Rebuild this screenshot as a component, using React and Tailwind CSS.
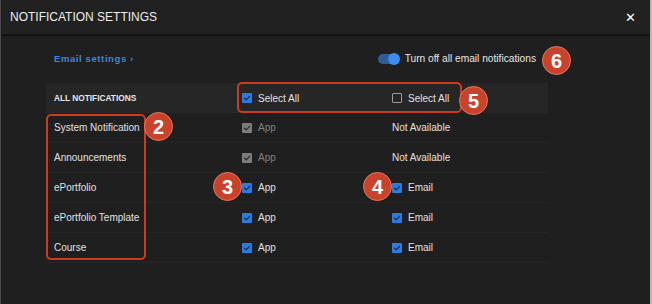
import React from "react";

const rows = [
  { name: "System Notification", app: "disabled", email: null },
  { name: "Announcements", app: "disabled", email: null },
  { name: "ePortfolio", app: "on", email: "on" },
  { name: "ePortfolio Template", app: "on", email: "on" },
  { name: "Course", app: "on", email: "on" },
];

function Check({ state }) {
  if (state === "off") {
    return <span className="inline-block w-[10px] h-[10px] rounded-[1px] border border-[#9a9a9a] bg-transparent" />;
  }
  const bg = state === "disabled" ? "bg-[#7c7c7c]" : "bg-[#2d7be0]";
  return (
    <span className={`inline-flex items-center justify-center w-[10px] h-[10px] rounded-[1px] ${bg}`}>
      <svg width="8" height="8" viewBox="0 0 8 8" fill="none">
        <path d="M1.5 4.2 L3.2 5.8 L6.6 2.3" stroke="#1f2a38" strokeWidth="1.2" strokeLinecap="round" strokeLinejoin="round" />
      </svg>
    </span>
  );
}

function Badge({ n, className }) {
  return (
    <div className={`absolute w-[29px] h-[29px] rounded-full bg-[#c9432c] border border-[#e07a62] flex items-center justify-center text-white font-bold text-[20px] leading-none ${className}`}>
      {n}
    </div>
  );
}

export default function App() {
  return (
    <div className="w-[652px] h-[304px] bg-[#1f1f1f] border-l border-[#4a4a4a] border-r-2 border-r-[#b8b8b8] overflow-hidden relative font-['Liberation_Sans',Arial,sans-serif] text-[#e0e0e0]">
      <header className="h-[34px] bg-[#212121] flex items-center justify-between pl-[9px] pr-[14px] shadow-[0_2px_2px_rgba(0,0,0,0.45)] relative z-10">
        <h1 className="text-[12px] text-[#ececec]">NOTIFICATION SETTINGS</h1>
        <span className="text-[13px] text-white leading-none">✕</span>
      </header>

      <div className="relative pl-[45px] pr-[102px] pt-[17px]">
        <div className="flex items-center justify-between h-[16px] pr-[12px]">
          <span className="pl-[8px] text-[9.5px] font-bold tracking-[0.6px] text-[#3d86d8]">Email settings ›</span>
          <div className="flex items-center gap-[6px]">
            <span className="relative w-[21px] h-[10px] rounded-full bg-[#2f5d95]">
              <span className="absolute right-[-1px] top-[-1px] w-[12px] h-[12px] rounded-full bg-[#3a8ef0]" />
            </span>
            <span className="text-[10.2px] text-[#e6e6e6]">Turn off all email notifications</span>
          </div>
        </div>

        <div className="mt-[16px] grid grid-cols-[191px_150px_161px] text-[10px]">
          <div className="col-span-3 grid grid-cols-subgrid bg-[#262626] h-[30px] items-center">
            <span className="pl-[8px] text-[8.3px] font-bold text-[#e8e8e8]">ALL NOTIFICATIONS</span>
            <span className="pl-[5px] flex items-center gap-[6px]"><Check state="on" />Select All</span>
            <span className="pl-[5px] flex items-center gap-[6px]"><Check state="off" />Select All</span>
          </div>
          {rows.map((r) => (
            <div key={r.name} className="col-span-3 grid grid-cols-subgrid h-[30px] items-center border-b border-[#252525]">
              <span className="pl-[8px]">{r.name}</span>
              <span className={`pl-[5px] flex items-center gap-[6px] ${r.app === "disabled" ? "text-[#808080]" : ""}`}>
                <Check state={r.app} />App
              </span>
              <span className="pl-[5px] flex items-center gap-[6px]">
                {r.email ? (<><Check state={r.email} />Email</>) : "Not Available"}
              </span>
            </div>
          ))}
        </div>

        <div className="absolute left-[45px] top-[80px] w-[100px] h-[146px] rounded-[5px] border-2 border-[#cc3a22]" />
        <div className="absolute left-[236px] top-[48px] w-[225px] h-[31px] rounded-[5px] border-2 border-[#cc3a22]" />
      </div>

      <Badge n="6" className="left-[541px] top-[46px]" />
      <Badge n="5" className="left-[458px] top-[86px]" />
      <Badge n="2" className="left-[143px] top-[112px]" />
      <Badge n="3" className="left-[212px] top-[172px]" />
      <Badge n="4" className="left-[362px] top-[172px]" />
    </div>
  );
}
